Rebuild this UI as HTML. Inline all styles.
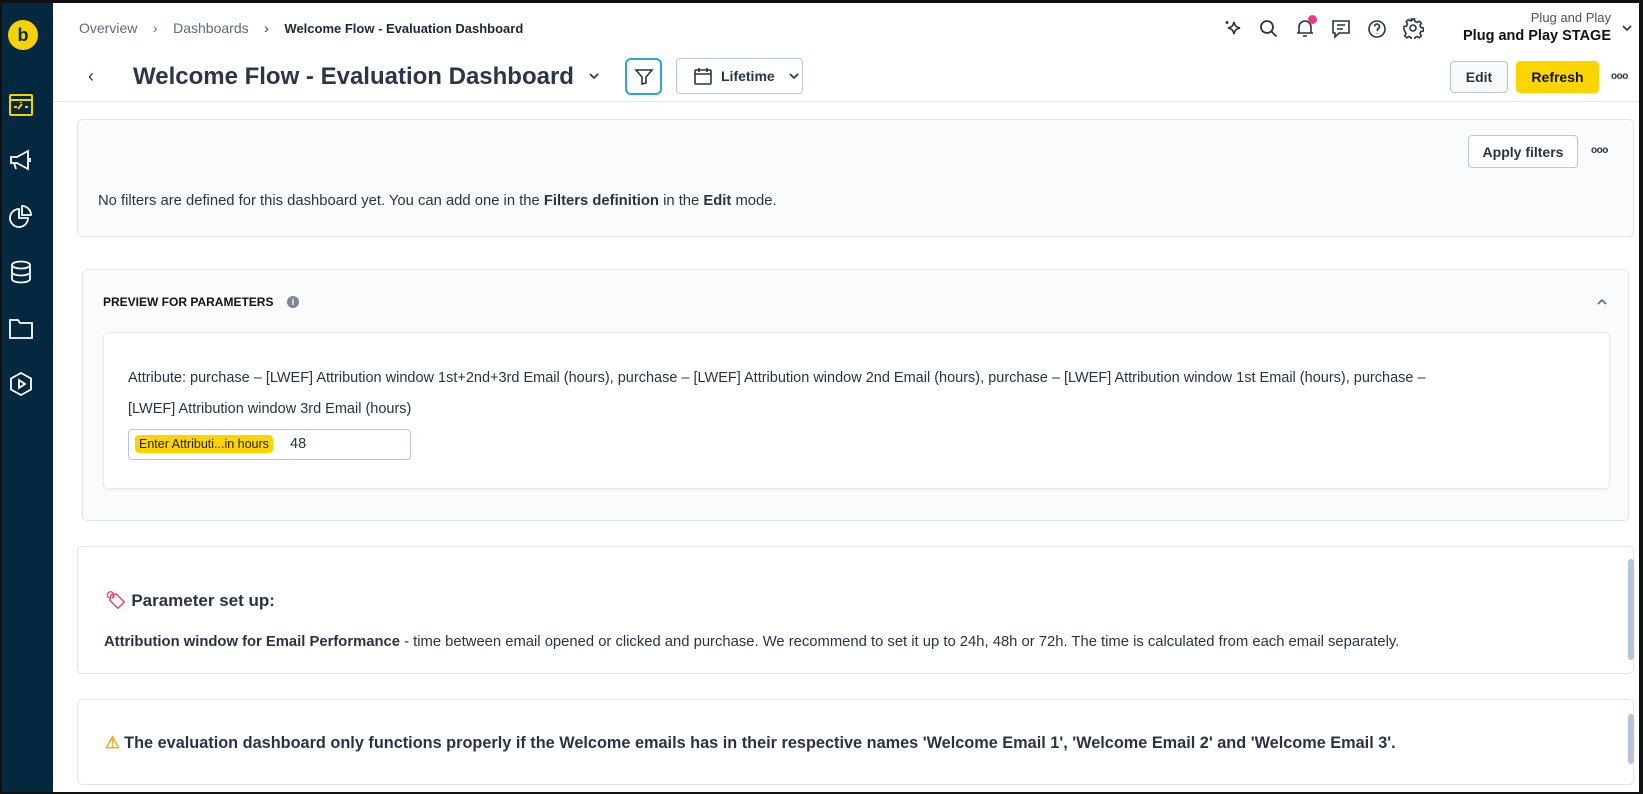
<!DOCTYPE html>
<html><head><meta charset="utf-8"><style>
*{box-sizing:border-box;margin:0;padding:0}
body{width:1643px;height:794px;overflow:hidden;background:#fff;font-family:"Liberation Sans",Arial,sans-serif;color:#283445;position:relative}
.a{position:absolute}
.frame{position:absolute;left:0;top:0;width:1643px;height:794px;border:2px solid #111;border-top-width:3px;border-right-width:4px;pointer-events:none;z-index:10}
.side{left:0;top:0;width:53px;height:794px;background:#03283f}
.ico{position:absolute;left:8px;width:26px;height:26px}
.btn{position:absolute;border:1px solid #b9c5da;border-radius:4px;background:#f8fafd;font-weight:bold;font-size:14px;display:flex;align-items:center;justify-content:center;color:#283445}
.card{position:absolute;border:1px solid #dfe5ef;border-radius:5px}
.sb{position:absolute;width:6px;border-radius:3px;background:#b8c3da}
.t{white-space:nowrap}
.dots{position:absolute;font-size:10px;font-weight:bold;letter-spacing:-0.5px;color:#283445}
</style></head><body>
<div class="frame"></div>
<div class="a side">
  <div class="a" style="left:8px;top:20px;width:30px;height:30px;border-radius:50%;background:#f7d100;color:#03283f;font-weight:bold;font-size:18px;text-align:center;line-height:30px">b</div>
  <svg class="ico" style="top:92px" viewBox="0 0 26 26" fill="none" stroke="#f7d100" stroke-width="2"><rect x="2" y="3" width="22" height="20" rx="1"/><path d="M2 8h22M6 15h3M17 15h3M10 17l4-5M13 11v-1"/></svg>
  <svg class="ico" style="top:147px" viewBox="0 0 26 26" fill="none" stroke="#fff" stroke-width="1.8"><path d="M3 10h6l11-6v18L9 16H3zM6 16l2 6M22 11v4"/></svg>
  <svg class="ico" style="top:203px" viewBox="0 0 26 26" fill="none" stroke="#fff" stroke-width="1.8"><path d="M11 6a9 9 0 1 0 9 9h-9z"/><path d="M14 3a9 9 0 0 1 9 9h-9z"/></svg>
  <svg class="ico" style="top:259px" viewBox="0 0 26 26" fill="none" stroke="#fff" stroke-width="1.8"><ellipse cx="13" cy="6" rx="9" ry="3.5"/><path d="M4 6v14c0 2 4 3.5 9 3.5s9-1.5 9-3.5V6M4 13c0 2 4 3.5 9 3.5s9-1.5 9-3.5"/></svg>
  <svg class="ico" style="top:315px" viewBox="0 0 26 26" fill="none" stroke="#fff" stroke-width="1.8"><path d="M2 5h8l2 3h12v15H2z"/></svg>
  <svg class="ico" style="top:371px" viewBox="0 0 26 26" fill="none" stroke="#fff" stroke-width="1.8"><path d="M13 2l10 5.5v11L13 24 3 18.5v-11z"/><path d="M11 9v8l6-4z"/></svg>
</div>

<div class="a t" style="left:79px;top:20px;font-size:14px;color:#5d6a7e">Overview&nbsp;&nbsp;&nbsp;&nbsp;›&nbsp;&nbsp;&nbsp;&nbsp;Dashboards&nbsp;&nbsp;&nbsp;&nbsp;<span style="color:#283445">›</span>&nbsp;&nbsp;&nbsp;&nbsp;<b style="color:#1c2636;font-size:13px">Welcome Flow - Evaluation Dashboard</b></div>
<div class="a" style="left:88px;top:66px;font-size:18px">‹</div>
<div class="a t" style="left:133px;top:63px;font-size:24px;font-weight:bold;color:#2b3648">Welcome Flow - Evaluation Dashboard</div>
<svg class="a" style="left:588px;top:72px" width="12" height="8" viewBox="0 0 12 8" fill="none" stroke="#283445" stroke-width="1.6"><path d="M2 2l4 4 4-4"/></svg>
<div class="a" style="left:625px;top:58px;width:37px;height:37px;border:2px solid #2fa5d3;border-radius:6px"></div>
<svg class="a" style="left:634px;top:67px" width="20" height="20" viewBox="0 0 20 20" fill="none" stroke="#283445" stroke-width="1.6"><path d="M2 3h16l-6 7v6l-4 1v-7z"/></svg>
<div class="btn" style="left:676px;top:58px;width:127px;height:36px;background:#fff;justify-content:flex-start;padding-left:16px">
<svg width="20" height="20" viewBox="0 0 20 20" fill="none" stroke="#283445" stroke-width="1.6"><rect x="2" y="4" width="16" height="14" rx="1"/><path d="M2 8h16M6 2v4M14 2v4"/></svg><span style="margin-left:8px">Lifetime</span>
<svg style="margin-left:14px" width="10" height="8" viewBox="0 0 10 8" fill="none" stroke="#283445" stroke-width="1.6"><path d="M1 2l4 4 4-4"/></svg></div>

<svg class="a" style="left:1222px;top:18px" width="22" height="22" viewBox="0 0 22 22" fill="none" stroke="#283445" stroke-width="1.6"><path d="M12 4c1 4 2 5 6 6-4 1-5 2-6 6-1-4-2-5-6-6 4-1 5-2 6-6zM5 3v3M3.5 4.5h3"/></svg>
<svg class="a" style="left:1258px;top:18px" width="22" height="22" viewBox="0 0 22 22" fill="none" stroke="#283445" stroke-width="1.8"><circle cx="9" cy="9" r="6"/><path d="M13.5 13.5l5 5"/></svg>
<svg class="a" style="left:1294px;top:17px" width="22" height="22" viewBox="0 0 22 22" fill="none" stroke="#283445" stroke-width="1.6"><path d="M5 16V10a6 6 0 0 1 12 0v6h2H3zM9 19h4"/></svg>
<div class="a" style="left:1308px;top:15px;width:9px;height:9px;border-radius:50%;background:#ef3b8c"></div>
<svg class="a" style="left:1330px;top:18px" width="22" height="22" viewBox="0 0 22 22" fill="none" stroke="#283445" stroke-width="1.6"><path d="M3 3h16v12H9l-4 4v-4H3z M7 7h8M7 11h6"/></svg>
<svg class="a" style="left:1366px;top:18px" width="22" height="22" viewBox="0 0 22 22" fill="none" stroke="#283445" stroke-width="1.6"><circle cx="11" cy="11" r="8"/><path d="M8.5 8.5a2.5 2.5 0 1 1 3 2.5v2M11 15.5v.5"/></svg>
<svg class="a" style="left:1402px;top:17px" width="22" height="22" viewBox="0 0 22 22" fill="none" stroke="#283445" stroke-width="1.6"><circle cx="11" cy="11" r="3"/><path d="M9.5 2h3l.5 2.5 2 1 2.3-1.3 2 2-1.3 2.3 1 2 2.5.5v3l-2.5.5-1 2 1.3 2.3-2 2-2.3-1.3-2 1-.5 2.5h-3l-.5-2.5-2-1-2.3 1.3-2-2 1.3-2.3-1-2L2 12.5v-3l2.5-.5 1-2-1.3-2.3 2-2 2.3 1.3 2-1z"/></svg>
<div class="a t" style="right:32px;top:10px;font-size:13px;color:#4a5568">Plug and Play</div>
<div class="a t" style="right:32px;top:28px;font-size:14.5px;font-weight:bold;color:#111">Plug and Play STAGE</div>
<svg class="a" style="left:1622px;top:24px" width="10" height="8" viewBox="0 0 10 8" fill="none" stroke="#283445" stroke-width="1.6"><path d="M1 2l4 4 4-4"/></svg>
<div class="btn" style="left:1450px;top:61px;width:58px;height:32px">Edit</div>
<div class="btn" style="left:1516px;top:61px;width:83px;height:32px;background:#fcd400;border-color:#fcd400;color:#111">Refresh</div>
<div class="dots" style="left:1611px;top:71px">ooo</div>
<div class="a" style="left:53px;top:101px;width:1586px;height:1px;background:#dfe5ef"></div>

<div class="card" style="left:77px;top:119px;width:1557px;height:118px;background:#f9fbfd">
  <div class="btn" style="left:1390px;top:15px;width:110px;height:33px;background:#fff">Apply filters</div>
  <div class="dots" style="left:1513px;top:25px">ooo</div>
  <div class="a t" style="left:20px;top:73px;font-size:14.8px">No filters are defined for this dashboard yet. You can add one in the <b>Filters definition</b> in the <b>Edit</b> mode.</div>
</div>

<div class="card" style="left:82px;top:269px;width:1547px;height:252px;background:#f9fbfd">
  <div class="a t" style="left:20px;top:25px;font-size:12px;font-weight:bold;color:#111">PREVIEW FOR PARAMETERS</div>
  <div class="a" style="left:204px;top:26px;width:12px;height:12px;border-radius:50%;background:#7b869b;color:#fff;font-size:9px;font-weight:bold;text-align:center;line-height:12px">i</div>
  <svg class="a" style="left:1513px;top:28px" width="12" height="8" viewBox="0 0 12 8" fill="none" stroke="#5d6a7e" stroke-width="1.6"><path d="M2 6l4-4 4 4"/></svg>
  <div class="a" style="left:20px;top:62px;width:1507px;height:157px;background:#fff;border:1px solid #e6ebf2;border-radius:5px;box-shadow:0 1px 2px rgba(0,0,0,.06)">
    <div class="a" style="left:24px;top:30px;width:1330px;font-size:14.5px;line-height:31px">Attribute: purchase – [LWEF] Attribution window 1st+2nd+3rd Email (hours), purchase – [LWEF] Attribution window 2nd Email (hours), purchase – [LWEF] Attribution window 1st Email (hours), purchase – [LWEF] Attribution window 3rd Email (hours)</div>
    <div class="a" style="left:24px;top:96px;width:283px;height:31px;border:1px solid #b9c5da;border-radius:4px">
      <div class="a t" style="left:6px;top:5px;height:18px;padding:0 4px;background:#fcd400;border-radius:4px;font-size:12.5px;line-height:18px;color:#222">Enter Attributi...in hours</div>
      <div class="a" style="left:161px;top:6px;font-size:14.5px">48</div>
    </div>
  </div>
</div>

<div class="card" style="left:77px;top:546px;width:1557px;height:128px">
  <div class="a t" style="left:27px;top:44px;font-size:17px;font-weight:bold"><span style="color:#ef3b5a">🏷</span> Parameter set up:</div>
  <div class="a t" style="left:26px;top:87px;font-size:14.8px"><b>Attribution window for Email Performance</b> - time between email opened or clicked and purchase. We recommend to set it up to 24h, 48h or 72h. The time is calculated from each email separately.</div>
  <div class="sb" style="left:1550px;top:12px;height:101px"></div>
</div>

<div class="card" style="left:77px;top:699px;width:1557px;height:86px">
  <div class="a t" style="left:27px;top:33px;font-size:16.3px;font-weight:bold"><span style="color:#f5a623">⚠</span> The evaluation dashboard only functions properly if the Welcome emails has in their respective names 'Welcome Email 1', 'Welcome Email 2' and 'Welcome Email 3'.</div>
  <div class="sb" style="left:1550px;top:14px;height:50px"></div>
</div>
</body></html>
